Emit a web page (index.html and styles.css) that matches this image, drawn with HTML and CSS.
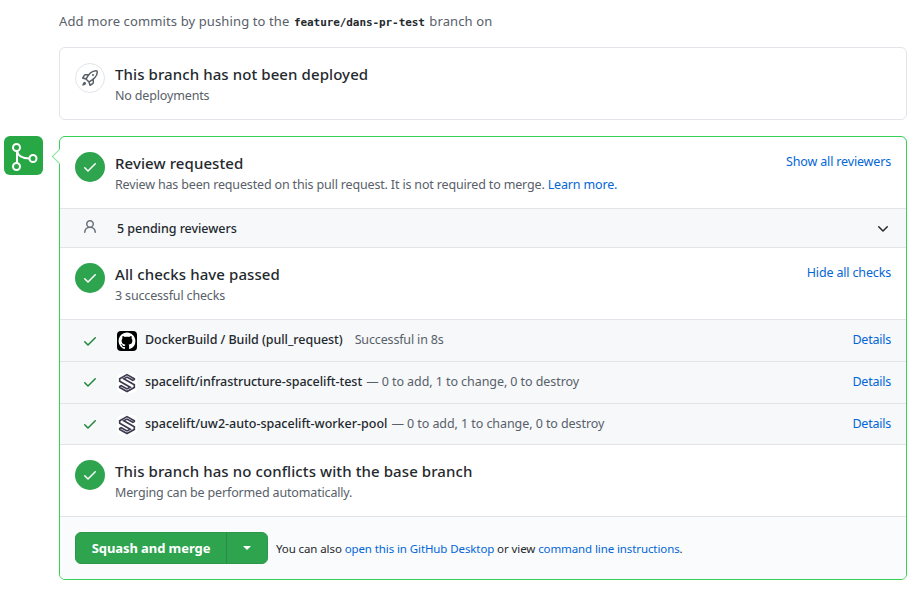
FILE: index.html
```html
<!DOCTYPE html>
<html lang="en">
<head>
<meta charset="utf-8">
<title>Pull request</title>
<link rel="stylesheet" href="styles.css">
</head>
<body>
<svg class="sprite" aria-hidden="true">
  <symbol id="check" viewBox="0 0 16 16"><path d="M13.78 4.22a.75.75 0 010 1.06l-7.25 7.25a.75.75 0 01-1.06 0L2.22 9.28a.75.75 0 011.06-1.06L6 10.94l6.72-6.72a.75.75 0 011.06 0z"/></symbol>
  <symbol id="spacelift" viewBox="0 0 20 20"><rect width="20" height="20" rx="5" fill="#fff"/><path d="M17.3 5.7 10 1.600 2.700 5.700V8.200L13.200 14.200 10 15.900 4.200 12.700 2.700 13.500V14.500L10 18.600 17.300 14.500V11.800L6.800 5.800 10 4.100 15.800 7.300 17.300 6.500Z" fill="none" stroke="#3d3a50" stroke-width="1.700"/></symbol>
</svg>
<main class="page">
  <p class="push-hint">Add more commits by pushing to the <code>feature/dans-pr-test</code> branch on</p>

  <section class="card deploy">
    <div class="item">
      <span class="badge badge-outline"><svg width="16" height="16" viewBox="0 0 16 16"><path fill-rule="evenodd" d="M14.064 0a8.75 8.75 0 00-6.187 2.563l-.459.458c-.314.314-.616.641-.904.979H3.31a1.75 1.75 0 00-1.49.833L.11 7.607a.75.75 0 00.418 1.11l3.102.954c.037.051.079.1.124.145l2.429 2.428c.046.046.094.088.145.125l.954 3.102a.75.75 0 001.11.418l2.774-1.707a1.75 1.75 0 00.833-1.49V9.485c.338-.288.665-.59.979-.904l.458-.459A8.75 8.75 0 0016 1.936V1.75A1.75 1.75 0 0014.25 0h-.186zM10.5 10.625c-.088.06-.177.118-.266.175l-2.35 1.521.548 1.783 1.949-1.2a.25.25 0 00.119-.213v-2.066zM3.678 8.116L5.2 5.766c.058-.09.117-.178.176-.266H3.309a.25.25 0 00-.213.119l-1.2 1.95 1.782.547zm5.26-4.493A7.25 7.25 0 0114.063 1.5h.186a.25.25 0 01.25.25v.186a7.25 7.25 0 01-2.123 5.127l-.459.458a15.21 15.21 0 01-2.499 2.02l-2.317 1.5-2.143-2.143 1.5-2.317a15.25 15.25 0 012.02-2.5l.458-.458h.002zM12 5a1 1 0 11-2 0 1 1 0 012 0zm-8.44 9.56a1.5 1.5 0 10-2.12-2.12c-.734.73-1.047 2.332-1.15 3.003a.23.23 0 00.265.265c.671-.103 2.273-.416 3.005-1.148z"/></svg></span>
      <div class="copy"><h3>This branch has not been deployed</h3><p>No deployments</p></div>
    </div>
  </section>

  <div class="merge">
    <div class="merge-avatar"><svg width="39" height="39" viewBox="0 0 39 39"><g fill="none" stroke="#fff" stroke-width="2"><circle cx="12.500" cy="11.500" r="3.500"/><circle cx="12.500" cy="30.500" r="3.500"/><circle cx="29" cy="22.500" r="3.500"/><path d="M13 15v12M13 15c1 5 5 7.500 12.500 7.500"/></g></svg></div>
    <section class="card merge-card">
      <div class="item">
        <span class="badge"><svg width="16" height="16"><use href="#check"/></svg></span>
        <div class="copy"><h3>Review requested</h3><p>Review has been requested on this pull request. It is not required to merge. <a href="#">Learn more.</a></p></div>
        <a href="#" class="toggle">Show all reviewers</a>
      </div>
      <div class="pending">
        <svg class="person" width="16" height="16" viewBox="0 0 16 16"><path d="M10.5 5a2.5 2.5 0 11-5 0 2.5 2.5 0 015 0zm.061 3.073a4 4 0 10-5.123 0 6.004 6.004 0 00-3.431 5.142.75.75 0 001.498.07 4.5 4.5 0 018.99 0 .75.75 0 101.498-.07 6.005 6.005 0 00-3.432-5.142z" fill-rule="evenodd"/></svg>
        <strong>5 pending reviewers</strong>
        <svg class="chevron" width="16" height="16" viewBox="0 0 16 16"><path d="M12.78 6.22a.75.75 0 010 1.06l-4.25 4.25a.75.75 0 01-1.06 0L3.22 7.28a.75.75 0 011.06-1.06L8 9.94l3.72-3.72a.75.75 0 011.06 0z"/></svg>
      </div>
      <div class="item">
        <span class="badge"><svg width="16" height="16"><use href="#check"/></svg></span>
        <div class="copy"><h3>All checks have passed</h3><p>3 successful checks</p></div>
        <a href="#" class="toggle">Hide all checks</a>
      </div>
      <ul class="checks">
        <li>
          <svg class="tick" width="16" height="16"><use href="#check"/></svg>
          <svg class="app" width="20" height="20" viewBox="0 0 20 20"><rect width="20" height="20" rx="4" fill="#000"/><path transform="translate(1.600 1.600) scale(1.050)" fill="#fff" d="M8 0C3.58 0 0 3.58 0 8c0 3.54 2.29 6.53 5.47 7.59.4.07.55-.17.55-.38 0-.19-.01-.82-.01-1.49-2.01.37-2.53-.49-2.69-.94-.09-.23-.48-.94-.82-1.13-.28-.15-.68-.52-.01-.53.63-.01 1.08.58 1.23.82.72 1.21 1.87.87 2.33.66.07-.52.28-.87.51-1.07-1.78-.2-3.64-.89-3.64-3.95 0-.87.31-1.59.82-2.15-.08-.2-.36-1.02.08-2.12 0 0 .67-.21 2.2.82.64-.18 1.32-.27 2-.27.68 0 1.36.09 2 .27 1.53-1.04 2.2-.82 2.2-.82.44 1.1.16 1.92.08 2.12.51.56.82 1.27.82 2.15 0 3.07-1.87 3.75-3.65 3.95.29.25.54.73.54 1.48 0 1.07-.01 1.93-.01 2.2 0 .21.15.46.55.38A8.013 8.013 0 0016 8c0-4.42-3.58-8-8-8z"/></svg>
          <strong>DockerBuild / Build (pull_request)</strong><span class="status spaced">Successful in 8s</span>
          <a href="#">Details</a>
        </li>
        <li>
          <svg class="tick" width="16" height="16"><use href="#check"/></svg>
          <svg class="app" width="20" height="20"><use href="#spacelift"/></svg>
          <strong>spacelift/infrastructure-spacelift-test</strong><span class="status">— 0 to add, 1 to change, 0 to destroy</span>
          <a href="#">Details</a>
        </li>
        <li>
          <svg class="tick" width="16" height="16"><use href="#check"/></svg>
          <svg class="app" width="20" height="20"><use href="#spacelift"/></svg>
          <strong>spacelift/uw2-auto-spacelift-worker-pool</strong><span class="status">— 0 to add, 1 to change, 0 to destroy</span>
          <a href="#">Details</a>
        </li>
      </ul>
      <div class="item">
        <span class="badge"><svg width="16" height="16"><use href="#check"/></svg></span>
        <div class="copy"><h3>This branch has no conflicts with the base branch</h3><p>Merging can be performed automatically.</p></div>
      </div>
      <div class="actions">
        <div class="button-group"><button class="main">Squash and merge</button><button class="more" aria-label="Select merge method"><span class="caret"></span></button></div>
        <p>You can also <a href="#">open this in GitHub Desktop</a> or view <a href="#">command line instructions</a>.</p>
      </div>
    </section>
  </div>
</main>
</body>
</html>
```
FILE: styles.css
```css
* { box-sizing: border-box; }
body { margin: 0; background: #fff; color: #24292e; font: 12.5px/20px "Noto Sans", sans-serif; letter-spacing: -.16px; }
h3, p, ul { margin: 0; padding: 0; }
a { color: #0366d6; text-decoration: none; }
svg { display: block; fill: currentColor; flex: none; }
.sprite { position: absolute; width: 0; height: 0; }
.page { padding: 11px 14px 10px 4px; }
.push-hint { height: 20px; margin: 0 0 16px 55px; font-size: 13px; letter-spacing: .12px; color: #586069; }
.push-hint code { margin: 0 1px; font: 600 11px "DejaVu Sans Mono", monospace; letter-spacing: -.08px; color: #24292e; }
.card { border: 1px solid #e1e4e8; border-radius: 6px; }
.deploy { margin-left: 55px; height: 73px; }
.item { display: flex; height: 71px; padding: 15px 15px 0; }
.badge { display: flex; align-items: center; justify-content: center; flex: none; width: 30px; height: 30px; margin-right: 10px; border-radius: 50%; background: #2ea44f; color: #fff; }
.badge-outline { border: 1px solid #e1e4e8; background: #fff; color: #586069; }
.copy { flex: 1; margin-top: -1px; }
h3 { font-size: 15px; line-height: 24px; font-weight: 500; letter-spacing: .09px; }
.copy p { margin-top: 1px; line-height: 18px; color: #586069; }
.merge { display: flex; gap: 16px; margin-top: 16px; }
.merge-avatar { width: 39px; height: 39px; border-radius: 6px; background: #28a745; }
.merge-card { position: relative; flex: 1; height: 444px; border-color: #34d058; }
.merge-card::before { content: ""; position: absolute; left: -6px; top: 14px; width: 10px; height: 10px; border: solid #85e29a; border-width: 0 0 1px 1px; background: #fff; transform: rotate(45deg); }
.pending { display: flex; align-items: center; height: 40px; padding: 0 15px; border: solid #e1e4e8; border-width: 1px 0; background: #f6f8fa; }
strong { font-weight: 500; letter-spacing: -.05px; }
.pending strong { margin-top: 2px; }
.person { margin: -2px 19px 0 7px; color: #6a737d; }
.chevron { margin-left: auto; }
.checks { list-style: none; background: #f6f8fa; border-bottom: 1px solid #e1e4e8; }
.checks li { display: flex; height: 42px; padding: 10px 15px 0; border-top: 1px solid #e1e4e8; }
.checks li:last-child { height: 41px; }
.tick { color: #22863a; margin: 3px 19px 0 7px; }
.app { margin: 1px 8px 0 0; }
.checks li + li .tick { margin-top: 2px; }
.checks li + li .app { margin-top: 1px; }
.checks li:last-child strong { letter-spacing: -.01px; }
.status { margin-left: 4px; color: #586069; letter-spacing: -.07px; }
.spaced { margin-left: 12px; letter-spacing: -.15px; }
.checks a { margin-left: auto; letter-spacing: -.22px; }
.actions { display: flex; align-items: center; height: 63px; padding: 0 15px 1px; border-top: 1px solid #e1e4e8; border-radius: 0 0 5px 5px; background: #fafbfc; font-size: 11.5px; letter-spacing: -.1px; }
.actions p { margin-top: 2px; }
.button-group { display: flex; width: 193px; height: 32px; margin-right: 8px; border: 1px solid #2c974b; border-radius: 6px; background: #2ea44f; overflow: hidden; }
button { padding: 0; border: 0; background: none; color: #fff; font: 700 13px "Noto Sans", sans-serif; letter-spacing: -.08px; }
.main { width: 151px; border-right: 1px solid #2b8a46; }
.more { display: flex; flex: 1; align-items: center; justify-content: center; }
.caret { border: 4px solid transparent; border-top-color: #fff; border-bottom: 0; }
```
